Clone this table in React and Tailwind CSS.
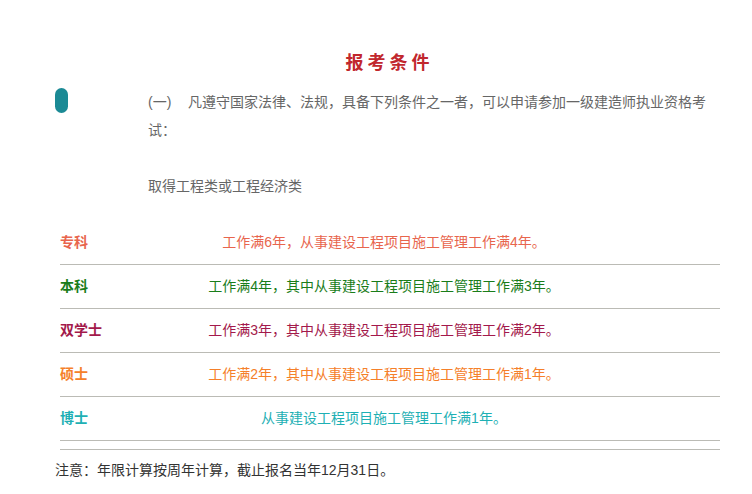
import React from 'react';

const rows = [
  { label: '专科', text: '工作满6年，从事建设工程项目施工管理工作满4年。', color: 'text-[#e8654d]' },
  { label: '本科', text: '工作满4年，其中从事建设工程项目施工管理工作满3年。', color: 'text-[#1a7d1a]' },
  { label: '双学士', text: '工作满3年，其中从事建设工程项目施工管理工作满2年。', color: 'text-[#a3194b]' },
  { label: '硕士', text: '工作满2年，其中从事建设工程项目施工管理工作满1年。', color: 'text-[#f5802a]' },
  { label: '博士', text: '从事建设工程项目施工管理工作满1年。', color: 'text-[#1eb0b4]' },
];

const App = () => {
  return (
    <div className="w-[752px] h-[494px] bg-white font-['Liberation_Sans','Noto_Sans_CJK_SC',sans-serif] text-[14px] overflow-hidden">
      <div className="ml-[55px] w-[665px] pt-[51px]">
        <h1 className="text-center text-[18px] leading-[24px] font-bold tracking-[4px] text-[#c1272d] pl-[4px]">
          报考条件
        </h1>

        <div className="flex mt-[13px]">
          <div className="w-[93px] shrink-0">
            <div className="w-[13px] h-[25px] rounded-full bg-[#1b8a95]" />
          </div>
          <div className="w-[566px] text-[#666666] leading-[28px]">
            <p>
              <span className="inline-block w-[40px]">(一)</span>
              凡遵守国家法律、法规，具备下列条件之一者，可以申请参加一级建造师执业资格考试：
            </p>
            <p>&nbsp;</p>
            <p>取得工程类或工程经济类</p>
          </div>
        </div>

        <div className="ml-[5px] mt-[21px]">
          {rows.map((row) => (
            <div
              key={row.label}
              className={`grid grid-cols-[104px_440px_1fr] items-center h-[44px] border-b border-[#bbbbb5] ${row.color}`}
            >
              <div className="font-bold">{row.label}</div>
              <div className="text-center">{row.text}</div>
              <div />
            </div>
          ))}
          <div className="h-[9px] border-b border-[#bbbbb5]" />
        </div>

        <p className="mt-[10px] leading-[20px] text-[#333333]">
          注意：年限计算按周年计算，截止报名当年12月31日。
        </p>
      </div>
    </div>
  );
};

export default App;
